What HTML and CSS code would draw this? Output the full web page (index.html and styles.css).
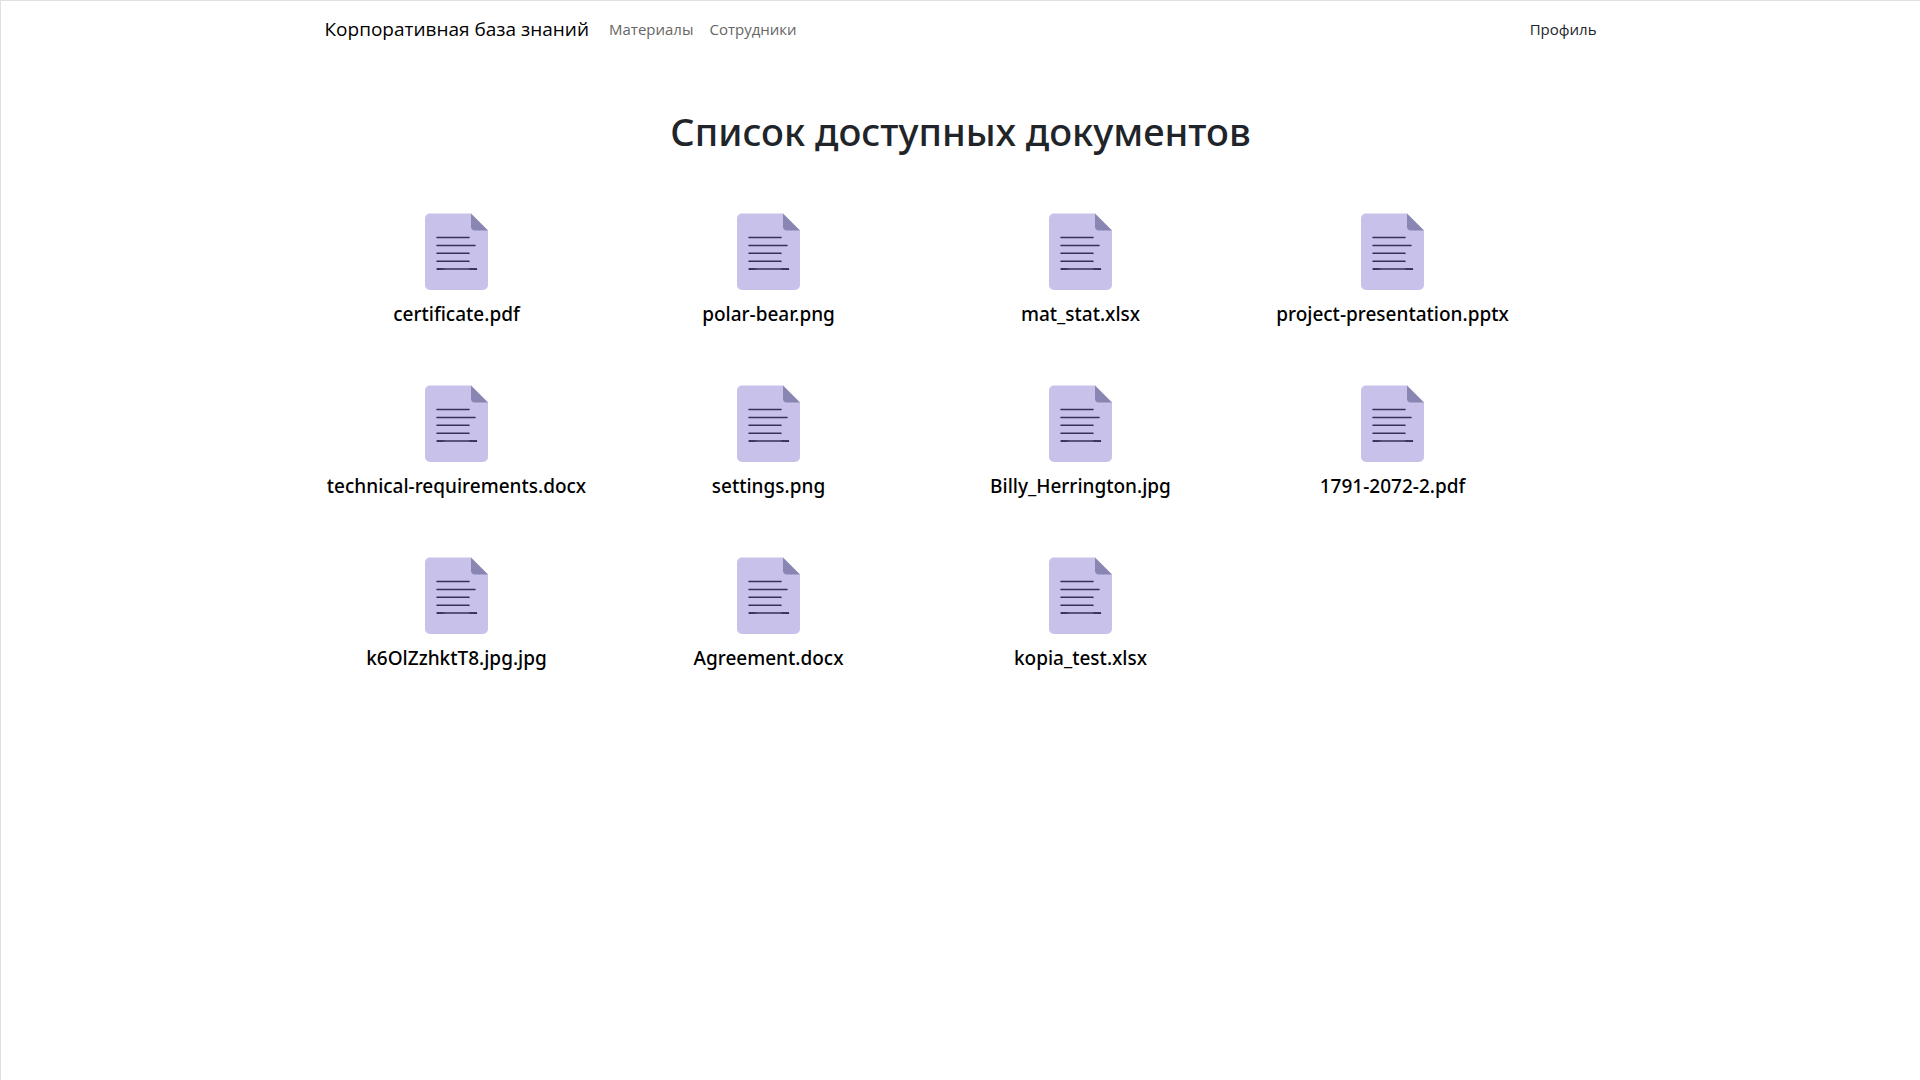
FILE: index.html
```html
<!DOCTYPE html>
<html lang="ru">
<head>
<meta charset="utf-8">
<meta name="viewport" content="width=device-width, initial-scale=1">
<title>Корпоративная база знаний</title>
<link rel="stylesheet" href="styles.css">
</head>
<body>
<svg class="sprite" aria-hidden="true">
  <symbol id="doc" viewBox="0 0 63 77">
    <path fill="#c8c1e9" d="M5 0.500H46L63 17.500V72a5 5 0 0 1-5 5H5a5 5 0 0 1-5-5V5.500a5 5 0 0 1 5-5z"/>
    <path fill="#8a86b3" d="M46 0.500L63 17.500H50a4 4 0 0 1-4-4z"/>
    <path stroke="#37325a" stroke-width="1.600" stroke-linecap="round" fill="none" d="M12 24.500H44M12 32.500H50M12 40.300H44M12 48.200H44M12 56H51.500"/>
    <path fill="#37325a" d="M12 55.200H21L17 57H12zM43 55.200H52V57H46z"/>
  </symbol>
</svg>
<header class="container navbar">
  <a class="brand" href="#">Корпоративная база знаний</a>
  <nav class="menu">
    <a class="link" href="#">Материалы</a>
    <a class="link" href="#">Сотрудники</a>
  </nav>
  <a class="link profile" href="#">Профиль</a>
</header>
<main class="container">
  <h1 class="title">Список доступных документов</h1>
  <ul class="files">
    <li><a class="file" href="#"><svg class="icon" aria-hidden="true"><use href="#doc"/></svg><span>certificate.pdf</span></a></li>
    <li><a class="file" href="#"><svg class="icon" aria-hidden="true"><use href="#doc"/></svg><span>polar-bear.png</span></a></li>
    <li><a class="file" href="#"><svg class="icon" aria-hidden="true"><use href="#doc"/></svg><span>mat_stat.xlsx</span></a></li>
    <li><a class="file" href="#"><svg class="icon" aria-hidden="true"><use href="#doc"/></svg><span>project-presentation.pptx</span></a></li>
    <li><a class="file" href="#"><svg class="icon" aria-hidden="true"><use href="#doc"/></svg><span>technical-requirements.docx</span></a></li>
    <li><a class="file" href="#"><svg class="icon" aria-hidden="true"><use href="#doc"/></svg><span>settings.png</span></a></li>
    <li><a class="file" href="#"><svg class="icon" aria-hidden="true"><use href="#doc"/></svg><span>Billy_Herrington.jpg</span></a></li>
    <li><a class="file" href="#"><svg class="icon" aria-hidden="true"><use href="#doc"/></svg><span>1791-2072-2.pdf</span></a></li>
    <li><a class="file" href="#"><svg class="icon" aria-hidden="true"><use href="#doc"/></svg><span>k6OlZzhktT8.jpg.jpg</span></a></li>
    <li><a class="file" href="#"><svg class="icon" aria-hidden="true"><use href="#doc"/></svg><span>Agreement.docx</span></a></li>
    <li><a class="file" href="#"><svg class="icon" aria-hidden="true"><use href="#doc"/></svg><span>kopia_test.xlsx</span></a></li>
  </ul>
</main>
</body>
</html>
```
FILE: styles.css
```css
* {
  box-sizing: border-box;
}

body {
  min-height: 100vh;
  margin: 0;
  border-top: 1px solid #e0e0e0;
  border-left: 1px solid #e0e0e0;
  background: #fff;
  color: #212529;
  font-family: "Segoe UI", "Open Sans", "Noto Sans", sans-serif;
  font-size: 15px;
  line-height: 24px;
}

a {
  color: inherit;
  text-decoration: none;
}

.sprite {
  display: none;
}

.container {
  max-width: 1320px;
  margin: 0 auto;
}

.navbar {
  display: flex;
  align-items: center;
  padding: 8px 16px 8px 24px;
}

.brand {
  margin-right: 12px;
  padding: 5px 0;
  color: #000;
  font-size: 19px;
  line-height: 30px;
}

.menu {
  display: flex;
}

.link {
  padding: 8px;
}

.menu .link {
  color: #666;
}

.profile {
  margin-left: auto;
}

.title {
  margin: 50px 0;
  font-family: "Segoe UI", "Noto Sans", sans-serif;
  font-size: 38px;
  font-weight: 500;
  line-height: 48px;
  text-align: center;
}

.files {
  display: grid;
  grid-template-columns: repeat(auto-fill, minmax(300px, 312px));
  row-gap: 48px;
  margin: 0;
  padding: 8px 0;
  list-style: none;
}

.file {
  display: flex;
  flex-direction: column;
  align-items: center;
  gap: 12px;
  height: 124px;
  color: #000;
  font-family: "Segoe UI", "Noto Sans", sans-serif;
  font-size: 19px;
  font-weight: 500;
}

.icon {
  flex: none;
  width: 63px;
  height: 77px;
}
```
